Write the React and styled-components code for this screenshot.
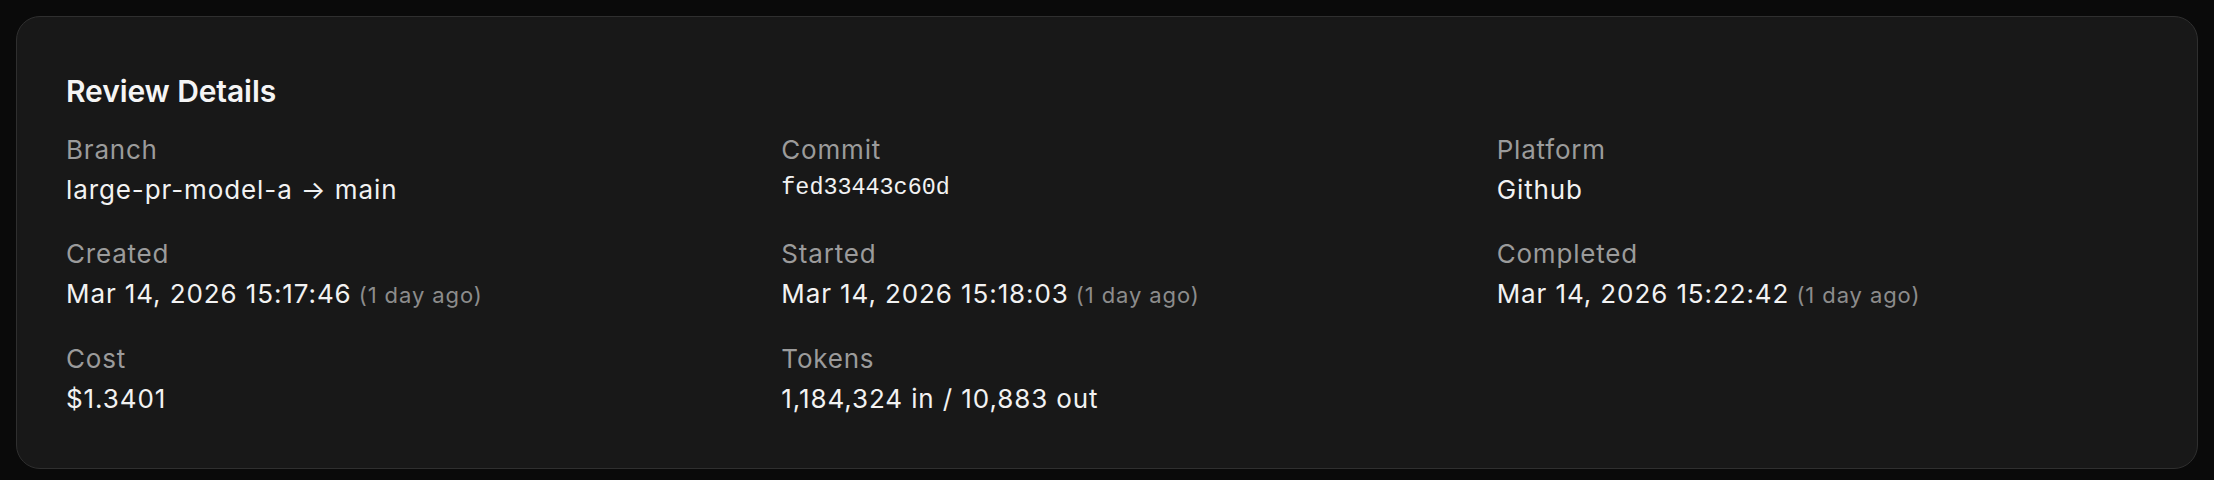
import React from "react";
import styled, { createGlobalStyle } from "styled-components";

const Global = createGlobalStyle`
  html, body { margin: 0; padding: 0; background: #0a0a0a; }
  body { font-family: Inter, "Noto Sans", sans-serif; -webkit-font-smoothing: antialiased; }
`;

const Page = styled.div`
  padding: 16px 16px 13px 16px;
  background: #0a0a0a;
`;

const Card = styled.section`
  background: #181818;
  border: 1px solid #2f2f2f;
  border-radius: 24px;
  padding: 54px 49px 51px 49px;
`;

const Title = styled.h2`
  margin: 0 0 21px 0;
  font-size: 30px;
  line-height: 40px;
  font-weight: 600;
  color: #f5f5f5;
  letter-spacing: -0.1px;
`;

const Grid = styled.dl`
  margin: 0;
  display: grid;
  grid-template-columns: repeat(3, 1fr);
  column-gap: 64px;
  row-gap: 28px;
`;

const Field = styled.div`
  display: flex;
  flex-direction: column;
  gap: 4px;
`;

const Label = styled.dt`
  font-size: 26px;
  line-height: 36px;
  color: #9b9b9b;
  letter-spacing: 0.8px;
`;

const Value = styled.dd`
  margin: 0;
  font-size: 26px;
  line-height: 36px;
  color: #f2f2f2;
  letter-spacing: 0.9px;
`;

const Mono = styled(Value)`
  font-family: "Liberation Mono", "DejaVu Sans Mono", monospace;
  font-size: 23.4px;
  line-height: 32px;
  letter-spacing: 0;
`;

const Ago = styled.span`
  font-size: 22px;
  color: #8c8c8c;
  letter-spacing: 0.9px;
`;

const fields = [
  { label: "Branch", value: "large-pr-model-a → main" },
  { label: "Commit", value: "fed33443c60d", mono: true },
  { label: "Platform", value: "Github" },
  { label: "Created", value: "Mar 14, 2026 15:17:46", ago: "(1 day ago)" },
  { label: "Started", value: "Mar 14, 2026 15:18:03", ago: "(1 day ago)" },
  { label: "Completed", value: "Mar 14, 2026 15:22:42", ago: "(1 day ago)" },
  { label: "Cost", value: "$1.3401" },
  { label: "Tokens", value: "1,184,324 in / 10,883 out" },
];

export default function App() {
  return (
    <>
      <Global />
      <Page>
        <Card>
          <Title>Review Details</Title>
          <Grid>
            {fields.map((f) => {
              const V = f.mono ? Mono : Value;
              return (
                <Field key={f.label}>
                  <Label>{f.label}</Label>
                  <V>
                    {f.value}
                    {f.ago && <Ago> {f.ago}</Ago>}
                  </V>
                </Field>
              );
            })}
          </Grid>
        </Card>
      </Page>
    </>
  );
}
